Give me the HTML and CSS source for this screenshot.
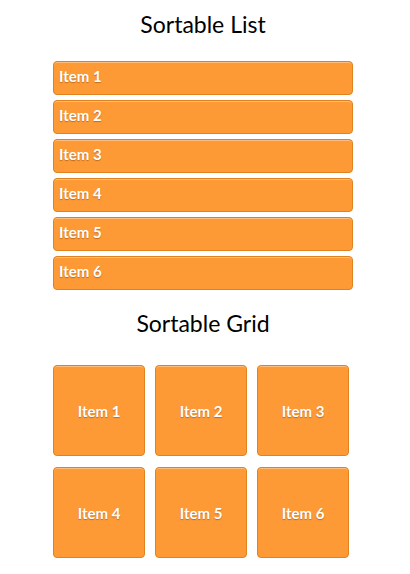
FILE: index.html
```html
<!DOCTYPE html>
<html>
<head>
<meta charset="utf-8">
<link rel="stylesheet" href="styles.css">
</head>
<body>
<div class="page">
  <h2 class="title title-list">Sortable List</h2>
  <ul class="list">
    <li class="item">Item 1</li>
    <li class="item">Item 2</li>
    <li class="item">Item 3</li>
    <li class="item">Item 4</li>
    <li class="item">Item 5</li>
    <li class="item">Item 6</li>
  </ul>
  <h2 class="title title-grid">Sortable Grid</h2>
  <ul class="grid">
    <li class="tile">Item 1</li>
    <li class="tile">Item 2</li>
    <li class="tile">Item 3</li>
    <li class="tile">Item 4</li>
    <li class="tile">Item 5</li>
    <li class="tile">Item 6</li>
  </ul>
</div>
</body>
</html>
```
FILE: styles.css
```css
html, body {
  margin: 0;
  padding: 0;
  background: #ffffff;
}
body {
  font-family: Lato, "Open Sans", sans-serif;
}
.page {
  width: 300px;
  padding-left: 53px;
  display: flex;
  flex-direction: column;
}
.title {
  margin: 0;
  font-size: 23px;
  font-weight: normal;
  line-height: 30px;
  text-align: center;
  color: #000;
}
.title-list {
  padding-top: 9px;
  margin-bottom: 22px;
}
.title-grid {
  margin-top: 18px;
  margin-bottom: 27px;
}
.list, .grid {
  list-style: none;
  margin: 0;
  padding: 0;
}
.list {
  display: flex;
  flex-direction: column;
  gap: 5px;
}
.item, .tile {
  box-sizing: border-box;
  background: #fd9a36;
  border: 1px solid #e0831f;
  border-radius: 4px;
  box-shadow: inset 0 1px 0 rgba(255, 255, 255, 0.35);
  color: #fff;
  font-weight: bold;
  font-size: 15px;
  text-shadow: 0 1px 1px rgba(120, 50, 0, 0.45);
}
.item {
  height: 34px;
  line-height: 28px;
  padding: 0 5px;
}
.grid {
  display: grid;
  grid-template-columns: repeat(3, 92px);
  grid-auto-rows: 91px;
  column-gap: 10px;
  row-gap: 11px;
}
.tile {
  display: flex;
  align-items: center;
  justify-content: center;
}
```
